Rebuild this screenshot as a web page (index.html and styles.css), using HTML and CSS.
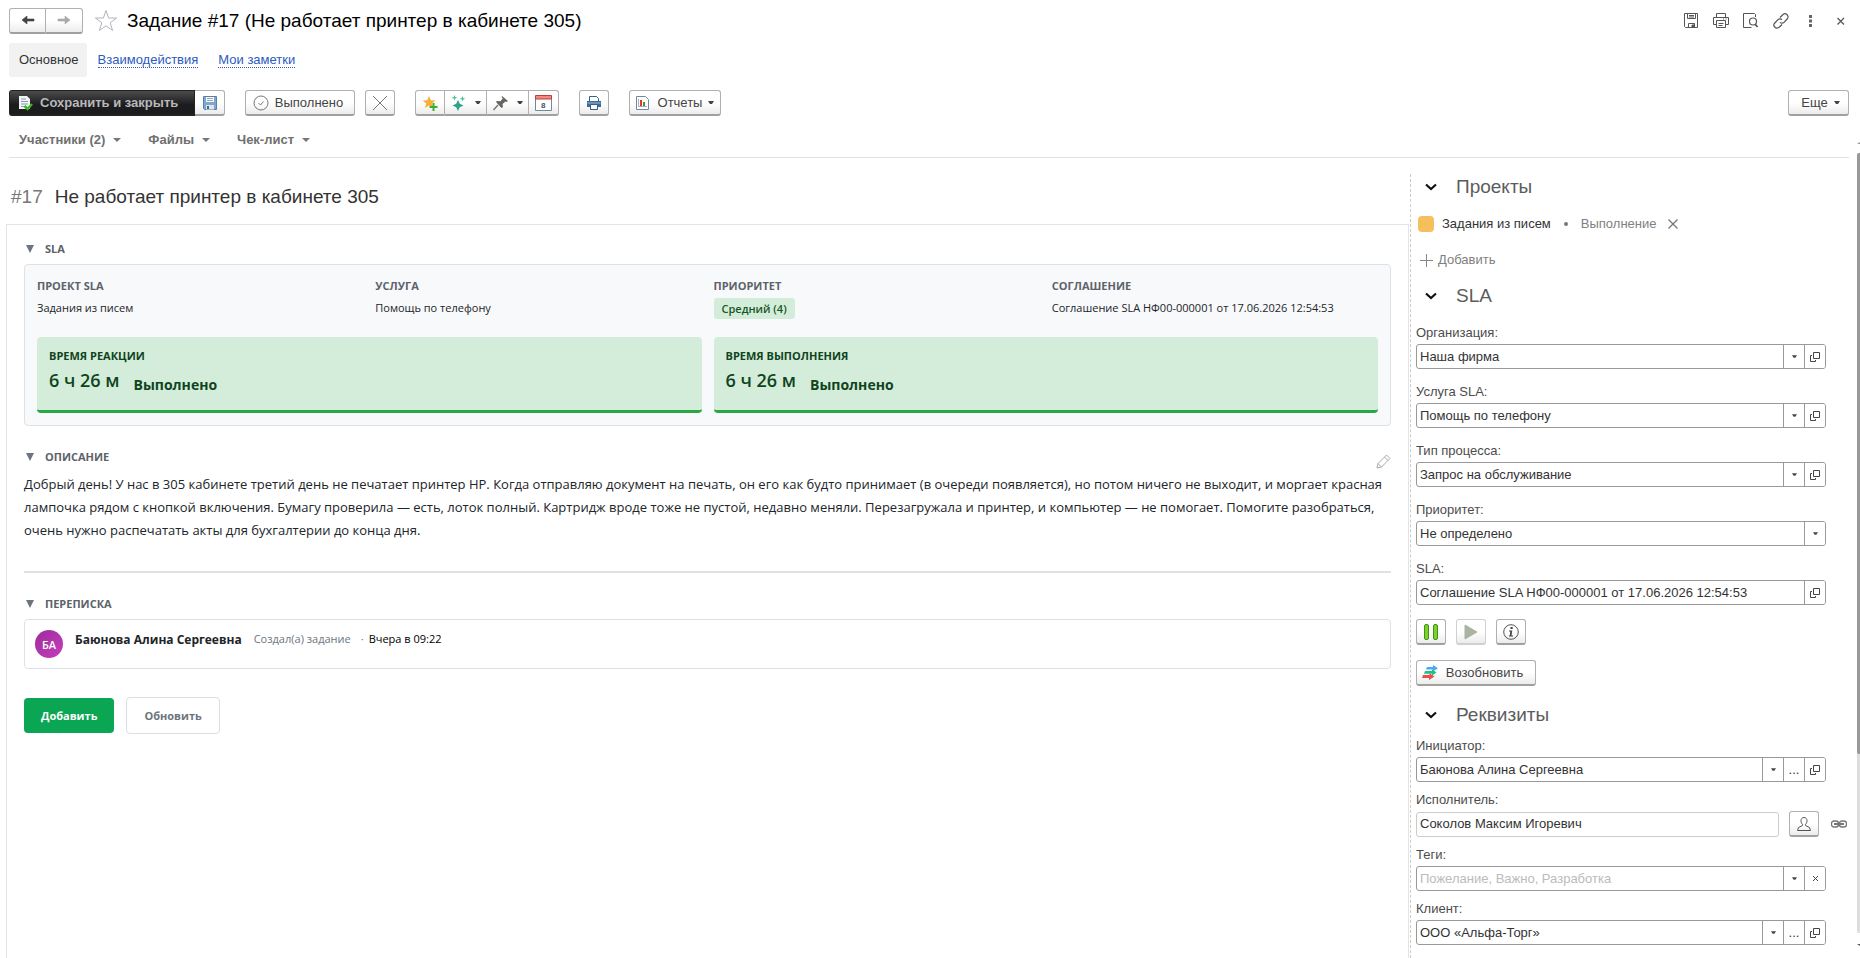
FILE: index.html
```html
<!DOCTYPE html>
<html lang="ru">
<head>
<meta charset="utf-8">
<title>Задание #17 (Не работает принтер в кабинете 305)</title>
<link rel="stylesheet" href="styles.css">
</head>
<body>
<svg class="sprite" aria-hidden="true">
  <symbol id="caret" viewBox="0 0 6 4"><path d="M0 0h6L4 3H2z" fill="#444"/></symbol>
  <symbol id="open" viewBox="0 0 10 10"><path d="M3.5.5h6v6h-6zM2 3.500H.5v6h5V8" fill="none" stroke="#444"/></symbol>
  <symbol id="chev" viewBox="0 0 12 8"><path d="M1 1.500l5 4.500 5-4.500" fill="none" stroke="#111" stroke-width="2.200"/></symbol>
  <symbol id="tri" viewBox="0 0 8 8"><path d="M0 0h8L4 8z" fill="#6c757d"/></symbol>
</svg>
<div class="page">
  <header class="titlebar">
    <div class="group">
      <button class="btn nav" aria-label="Назад"><svg width="14" height="10" viewBox="0 0 14 10"><path d="M1 5l5-4v3h7v2H6v3z" fill="#444" stroke="#444" stroke-width=".6"/></svg></button>
      <button class="btn nav" aria-label="Вперед"><svg width="14" height="10" viewBox="0 0 14 10"><path d="M13 5L8 1v3H1v2h7v3z" fill="#aaa" stroke="#aaa" stroke-width=".6"/></svg></button>
    </div>
    <button class="plain star" aria-label="Избранное"><svg width="24" height="23" viewBox="0 0 24 23"><path d="M12 1.500l2.600 7.500h8l-6.400 4.800 2.400 7.700-6.600-4.700-6.600 4.700 2.400-7.700L1.400 9h8z" fill="#fff" stroke="#b0b4b8"/></svg></button>
    <h1 class="title">Задание #17 (Не работает принтер в кабинете 305)</h1>
    <div class="tools">
      <button class="plain" aria-label="Сохранить"><svg width="16" height="16" viewBox="0 0 16 16" fill="none" stroke="#555"><path d="M1.500.5h13v14h-12l-1-1z"/><path d="M4.500.5v5h8v-5M6 2.500h5M6 4h5M5.500 14.500v-4h6v4"/><path d="M9 12h2v2H9z" fill="#555"/></svg></button>
      <button class="plain" aria-label="Печать"><svg width="16" height="16" viewBox="0 0 16 16" fill="none" stroke="#555"><path d="M3.500 4V.5h9V4M3.500 11.500h-3v-7h15v7h-3"/><path d="M3.500 7.500h9v7h-9zM5.500 10.500h5M5.500 12.500h4M10 6h1M12.500 6h1"/></svg></button>
      <button class="plain" aria-label="Просмотр"><svg width="16" height="16" viewBox="0 0 16 16" fill="none" stroke="#555"><path d="M12.500 4V1.500l-1-1H.5v14h8"/><circle cx="10" cy="8.500" r="3.500" stroke-width="1.200"/><path d="M12 11l2.500 3" stroke-width="1.800"/></svg></button>
      <button class="plain" aria-label="Ссылка"><svg width="16" height="16" viewBox="0 0 16 16" fill="none" stroke="#555" stroke-width="1.200"><path d="M7 4.500L9.800 1.800a2.800 2.800 0 0 1 4.400 4.200L11 9.300a2.800 2.800 0 0 1-4 0"/><path d="M9 11.500l-2.800 2.700A2.800 2.800 0 0 1 1.800 10L5 6.700a2.800 2.800 0 0 1 4 0"/></svg></button>
      <button class="plain" aria-label="Меню"><svg width="16" height="16" viewBox="0 0 16 16"><path d="M6 2h3v3H6zM6 6.500h3v3H6zM6 11h3v3H6z" fill="#666"/></svg></button>
      <button class="plain" aria-label="Закрыть"><svg width="16" height="16" viewBox="0 0 16 16"><path d="M4.500 5l6.500 6.500M11 5L4.500 11.500" stroke="#555" stroke-width="1.200"/></svg></button>
    </div>
  </header>

  <nav class="tabs">
    <span class="tab">Основное</span>
    <a class="link" href="#">Взаимодействия</a>
    <a class="link" href="#">Мои заметки</a>
  </nav>

  <div class="toolbar">
    <div class="group">
      <button class="btn primary"><svg width="16" height="16" viewBox="0 0 16 16"><path d="M1 1h8l3 3v10H1z" fill="#f2f5f8"/><path d="M3 4h5M3 6.500h7M3 9h7M3 11.500h4" stroke="#8a9aaa"/><path d="M6.500 11l3 3 4.500-5" fill="none" stroke="#3fb51f" stroke-width="2.500"/></svg>Сохранить и закрыть</button>
      <button class="btn icon" aria-label="Записать"><svg width="16" height="16" viewBox="0 0 16 16"><path d="M1.500 1.500h13v13h-12l-1-1z" fill="#7fa6cf" stroke="#5a80a6"/><path d="M4 2h8v5H4z" fill="#fff"/><path d="M5 3.500h6M5 5.500h6" stroke="#8fa3b5"/><path d="M4 10h8v4.500H4z" fill="#dfe7ee"/><path d="M5 11h2v3H5z" fill="#41698f"/></svg></button>
    </div>
    <button class="btn done"><svg width="16" height="16" viewBox="0 0 16 16" fill="none" stroke="#777"><circle cx="8" cy="8" r="7"/><path d="M5.500 8l2 2L10.500 6.500"/></svg>Выполнено</button>
    <button class="btn icon" aria-label="Отменить"><svg width="16" height="16" viewBox="0 0 16 16"><path d="M1 1l14 14M15 1L1 15" stroke="#777"/></svg></button>
    <div class="group favs">
      <button class="btn icon" aria-label="В избранное"><svg width="16" height="16" viewBox="0 0 16 16"><path d="M7 1l1.800 4.200 4.700.4-3.600 3 1.200 4.400L7 10.500 3 13l1.200-4.400L.6 5.600l4.600-.4z" fill="#f9ae3c"/><path d="M11.500 8v8M7.500 12h8" stroke="#3fae29" stroke-width="2"/></svg></button>
      <button class="btn drop" aria-label="Создать"><svg width="16" height="16" viewBox="0 0 16 16" fill="#2aa58c"><path d="M7 5l1.800 3.700L12.500 10.500l-3.700 1.800L7 16l-1.800-3.700L1.500 10.500l3.700-1.800z"/><path d="M3.500 0l.8 2 2 .8-2 .8-.8 2-.8-2-2-.8 2-.8zM11.500 1l.8 2 2 .8-2 .8-.8 2-.8-2-2-.8 2-.8z" fill="#4cc49a"/></svg><svg class="car" width="6" height="4"><use href="#caret"/></svg></button>
      <button class="btn drop" aria-label="Закрепить"><svg width="16" height="16" viewBox="0 0 16 16"><path d="M9 1l6 5-1.500 1-1-.5L9.500 9l.5 3-1.500 1L2.800 6.800 4.500 6l3 .3 2.300-3L8.500 2z" fill="#66665f"/><path d="M5 10l-4.500 5" stroke="#777" stroke-width="1.500"/></svg><svg class="car" width="6" height="4"><use href="#caret"/></svg></button>
      <button class="btn icon" aria-label="Календарь"><svg width="17" height="16" viewBox="0 0 17 16"><path d="M.5 3.500h16v12H.5z" fill="#fff" stroke="#74889b"/><path d="M.5.5h16v3.500H.5z" fill="#f08a80" stroke="#c9393a"/><text x="6" y="13" class="cal">8</text></svg></button>
    </div>
    <button class="btn icon" aria-label="Печать"><svg width="16" height="16" viewBox="0 0 16 16"><path d="M3.500 6V1.500h7l2 2V6" fill="#fff" stroke="#345f88"/><path d="M1 6h14v6H1z" fill="#3f6b98"/><path d="M1.500 8h13" stroke="#9fbdd8"/><path d="M4.500 9.500h7v5h-7z" fill="#fff" stroke="#345f88"/></svg></button>
    <button class="btn reports"><svg width="13" height="14" viewBox="0 0 13 14"><path d="M.5.5h9l3 3v10H.5z" fill="#fff" stroke="#74889b"/><path d="M2.500 3v7.500H11" fill="none" stroke="#aab"/><path d="M4 4h2v6H4z" fill="#e5342b"/><path d="M7 6h2v4H7z" fill="#3b9b2e"/></svg>Отчеты<svg class="car" width="6" height="4"><use href="#caret"/></svg></button>
    <button class="btn more">Еще<svg class="car" width="6" height="4"><use href="#caret"/></svg></button>
  </div>

  <div class="submenu">
    <button class="plain">Участники (2)<svg width="8" height="4" viewBox="0 0 8 4"><path d="M0 0h8L4 4z" fill="#777"/></svg></button>
    <button class="plain">Файлы<svg width="8" height="4" viewBox="0 0 8 4"><path d="M0 0h8L4 4z" fill="#777"/></svg></button>
    <button class="plain">Чек-лист<svg width="8" height="4" viewBox="0 0 8 4"><path d="M0 0h8L4 4z" fill="#777"/></svg></button>
  </div>

  <div class="body">
    <main class="main">
      <h2 class="subject"><span class="num">#17</span>Не работает принтер в кабинете 305</h2>
      <div class="panel">
        <h3 class="sect"><svg width="8" height="8"><use href="#tri"/></svg>SLA</h3>
        <section class="sla">
          <div class="facts">
            <div class="fact"><div class="cap">ПРОЕКТ SLA</div><div class="val">Задания из писем</div></div>
            <div class="fact"><div class="cap">УСЛУГА</div><div class="val">Помощь по телефону</div></div>
            <div class="fact"><div class="cap">ПРИОРИТЕТ</div><div class="badge">Средний (4)</div></div>
            <div class="fact"><div class="cap">СОГЛАШЕНИЕ</div><div class="val">Соглашение SLA НФ00-000001 от 17.06.2026 12:54:53</div></div>
          </div>
          <div class="meters">
            <div class="meter"><div class="mcap">ВРЕМЯ РЕАКЦИИ</div><div class="mrow"><span class="time">6 ч 26 м</span><span class="state">Выполнено</span></div></div>
            <div class="meter"><div class="mcap">ВРЕМЯ ВЫПОЛНЕНИЯ</div><div class="mrow"><span class="time">6 ч 26 м</span><span class="state">Выполнено</span></div></div>
          </div>
        </section>
        <div class="secthead">
          <h3 class="sect"><svg width="8" height="8"><use href="#tri"/></svg>ОПИСАНИЕ</h3>
          <button class="plain" aria-label="Изменить"><svg width="15" height="15" viewBox="0 0 15 15" fill="none" stroke="#aaa"><path d="M1 14l1-4.500L10.500 1l3.500 3.500L5.500 13zM8.500 3l3.500 3.500M2 9.500L5.500 13"/></svg></button>
        </div>
        <p class="desc">Добрый день! У нас в 305 кабинете третий день не печатает принтер HP. Когда отправляю документ на печать, он его как будто принимает (в очереди появляется), но потом ничего не выходит, и моргает красная лампочка рядом с кнопкой включения. Бумагу проверила — есть, лоток полный. Картридж вроде тоже не пустой, недавно меняли. Перезагружала и принтер, и компьютер — не помогает. Помогите разобраться, очень нужно распечатать акты для бухгалтерии до конца дня.</p>
        <hr class="rule">
        <h3 class="sect"><svg width="8" height="8"><use href="#tri"/></svg>ПЕРЕПИСКА</h3>
        <article class="msg">
          <div class="avatar">БА</div>
          <span class="name">Баюнова Алина Сергеевна</span>
          <span class="act">Создал(а) задание</span>
          <span class="sep">·</span>
          <span class="when">Вчера в 09:22</span>
        </article>
        <div class="actions">
          <button class="add">Добавить</button>
          <button class="refresh">Обновить</button>
        </div>
      </div>
    </main>

    <aside class="side">
      <h2 class="head"><svg width="12" height="8"><use href="#chev"/></svg>Проекты</h2>
      <div class="proj">
        <span class="swatch"></span><span>Задания из писем</span><span class="dot"></span><span class="stage">Выполнение</span>
        <button class="plain" aria-label="Убрать"><svg width="10" height="10" viewBox="0 0 10 10"><path d="M.5.5l9 9M9.500.5l-9 9" stroke="#777" stroke-width="1.300"/></svg></button>
      </div>
      <button class="plain addproj"><svg width="13" height="13" viewBox="0 0 13 13"><path d="M6.500 0v13M0 6.500h13" stroke="#888"/></svg>Добавить</button>
      <h2 class="head second"><svg width="12" height="8"><use href="#chev"/></svg>SLA</h2>
      <div class="fields">
        <div class="item"><label for="org">Организация:</label><div class="field"><input id="org" value="Наша фирма"><button aria-label="Выбрать"><svg width="5" height="4"><use href="#caret"/></svg></button><button aria-label="Открыть"><svg width="10" height="10"><use href="#open"/></svg></button></div></div>
        <div class="item"><label for="srv">Услуга SLA:</label><div class="field"><input id="srv" value="Помощь по телефону"><button aria-label="Выбрать"><svg width="5" height="4"><use href="#caret"/></svg></button><button aria-label="Открыть"><svg width="10" height="10"><use href="#open"/></svg></button></div></div>
        <div class="item"><label for="prc">Тип процесса:</label><div class="field"><input id="prc" value="Запрос на обслуживание"><button aria-label="Выбрать"><svg width="5" height="4"><use href="#caret"/></svg></button><button aria-label="Открыть"><svg width="10" height="10"><use href="#open"/></svg></button></div></div>
        <div class="item"><label for="pri">Приоритет:</label><div class="field"><select id="pri"><option>Не определено</option></select><span class="arrow"><svg width="5" height="4"><use href="#caret"/></svg></span></div></div>
        <div class="item"><label for="agr">SLA:</label><div class="field"><input id="agr" value="Соглашение SLA НФ00-000001 от 17.06.2026 12:54:53"><button aria-label="Открыть"><svg width="10" height="10"><use href="#open"/></svg></button></div></div>
      </div>
      <div class="control">
        <button class="btn icon" aria-label="Пауза"><svg width="14" height="16" viewBox="0 0 14 16"><rect x=".5" y=".5" width="4" height="15" rx="1.500" fill="#7ed321" stroke="#3a9420"/><rect x="9.500" y=".5" width="4" height="15" rx="1.500" fill="#7ed321" stroke="#3a9420"/></svg></button>
        <button class="btn icon" aria-label="Запустить" disabled><svg width="14" height="16" viewBox="0 0 14 16"><path d="M1 1l12 7-12 7z" fill="#a9b5a2" stroke="#a9b5a2" stroke-linejoin="round"/></svg></button>
        <button class="btn icon" aria-label="Сведения"><svg width="16" height="16" viewBox="0 0 16 16"><circle cx="8" cy="8" r="7.300" fill="none" stroke="#555"/><path d="M7.500 3h2.200v2H7.500zM6 6.500h3.300L8.500 11.500H10V12.500H6V11.500h.8l.5-4H6z" fill="#444"/></svg></button>
      </div>
      <button class="btn resume"><svg width="16" height="15" viewBox="0 0 16 15"><path d="M5 2h6V0l5 3.200-5 3V4.500H4z" fill="#4aa8ec"/><path d="M3 6h7V4.200L14.500 7.400 10 10.500V8.800H2z" fill="#1fbf8a"/><path d="M1 10h6.500V8.200l5 3.300L7 15v-2H0z" fill="#e8504a"/></svg>Возобновить</button>
      <h2 class="head third"><svg width="12" height="8"><use href="#chev"/></svg>Реквизиты</h2>
      <div class="fields tight">
        <div class="item"><label for="ini">Инициатор:</label><div class="field"><input id="ini" value="Баюнова Алина Сергеевна"><button aria-label="Выбрать"><svg width="5" height="4"><use href="#caret"/></svg></button><button aria-label="Показать все">...</button><button aria-label="Открыть"><svg width="10" height="10"><use href="#open"/></svg></button></div></div>
        <div class="item"><label for="exe">Исполнитель:</label><div class="exec"><div class="field pale"><input id="exe" value="Соколов Максим Игоревич" readonly></div><button class="btn icon" aria-label="Назначить"><svg width="14" height="14" viewBox="0 0 14 14"><path d="M7 .5C5 .5 4 2 4 3.800c0 1.500.6 2.700 1.500 3.500v1.200L1.500 10.500l-1 3h13l-1-3-4-2V7.300C9.400 6.500 10 5.300 10 3.800 10 2 9 .5 7 .5z" fill="none" stroke="#555"/></svg></button><svg width="16" height="8" viewBox="0 0 16 8" fill="none" stroke="#777"><rect x=".5" y="1" width="7" height="6" rx="2.500" stroke-width="1.400"/><rect x="8.500" y="1" width="7" height="6" rx="2.500" stroke-width="1.400"/><path d="M3 4h10" stroke-width="2"/></svg></div></div>
        <div class="item"><label for="tag">Теги:</label><div class="field"><input id="tag" placeholder="Пожелание, Важно, Разработка"><button aria-label="Выбрать"><svg width="5" height="4"><use href="#caret"/></svg></button><button aria-label="Очистить"><svg width="5" height="5" viewBox="0 0 5 5"><path d="M0 0l5 5M5 0L0 5" stroke="#444"/></svg></button></div></div>
        <div class="item"><label for="cli">Клиент:</label><div class="field"><input id="cli" value="ООО «Альфа-Торг»"><button aria-label="Выбрать"><svg width="5" height="4"><use href="#caret"/></svg></button><button aria-label="Показать все">...</button><button aria-label="Открыть"><svg width="10" height="10"><use href="#open"/></svg></button></div></div>
      </div>
    </aside>
  </div>
  <div class="scroll"><div class="thumb"></div></div>
</div>
</body>
</html>
```
FILE: styles.css
```css
* { box-sizing: border-box; }
body { margin: 0; background: #fff; color: #333; font: 13px/16px "Liberation Sans", Arial, sans-serif; }
button, input, select { font: inherit; color: inherit; margin: 0; }
h1, h2, h3, p { margin: 0; font-weight: normal; }
svg { display: block; flex: none; }
.sprite { position: absolute; width: 0; height: 0; }
.page { position: relative; display: flex; flex-direction: column; min-height: 100vh; padding-top: 8px; }
.plain { border: 0; padding: 0; background: none; display: flex; align-items: center; }
.group { display: flex; }

.btn { display: flex; align-items: center; justify-content: center; height: 26px; padding: 0; color: #444; background: linear-gradient(#fff 50%, #ececec); border: 1px solid #b0b0b0; border-bottom: 2px solid #a0a0a0; border-radius: 3px; white-space: nowrap; }
.btn:disabled { border-color: #d0d0d0; }
.btn.icon { width: 30px; }
.group .btn + .btn { border-left: 0; border-radius: 0; }
.group .btn:first-child { border-radius: 3px 0 0 3px; }
.group .btn:last-child { border-radius: 0 3px 3px 0; }

.titlebar { display: flex; align-items: center; height: 25px; padding: 0 11px 0 9px; }
.nav { width: 37px; }
.star { margin: 0 9px 0 11px; }
.title { font-size: 19px; line-height: 24px; color: #000; }
.tools { display: flex; gap: 14px; margin-left: auto; }

.tabs { display: flex; align-items: center; gap: 20px; margin: 10px 9px 0; }
.tab { padding: 9px 8px 9px 10px; background: #f2f2f2; border-radius: 3px; margin-right: -9px; }
.link { color: #2a5bc0; text-decoration: none; border-bottom: 1px dotted #2a5bc0; line-height: 15px; }

.toolbar { display: flex; margin: 13px 11px 0 9px; }
.btn.primary { width: 186px; justify-content: flex-start; gap: 6px; padding-left: 8px; color: #b8b8b8; font-weight: bold; background: linear-gradient(#4c4c4e, #1c1c1e 60%); border-color: #222; }
.done { width: 110px; gap: 6px; margin: 0 10px 0 20px; padding-right: 4px; }
.favs { margin: 0 20px; }
.drop { width: 42px; gap: 8px; }
.reports { width: 92px; gap: 9px; margin-left: 20px; }
.reports .car, .more .car { margin-left: -3px; }
.more { width: 61px; gap: 9px; padding-left: 4px; margin-left: auto; }
.cal { font: bold 8px "Liberation Sans", sans-serif; fill: #456; }

.submenu { display: flex; align-items: center; gap: 27px; height: 42px; padding: 6px 10px 0; margin: 0 11px 0 9px; border-bottom: 1px solid #e2e2e2; }
.submenu .plain { gap: 8px; color: #707070; font-weight: bold; }

.body { flex: 1; display: flex; padding-left: 6px; }
.main { flex: 1; min-width: 0; display: flex; flex-direction: column; }
.subject { display: flex; gap: 12px; padding: 27px 5px 15px; font-size: 19px; line-height: 24px; color: #333; }
.num { color: #777; }
.panel { flex: 1; border: 1px solid #e4e4e4; border-bottom: 0; padding: 16px 17px 0; font-family: "Open Sans", "Noto Sans", sans-serif; color: #212529; }
.sect { display: flex; align-items: center; gap: 11px; padding-left: 2px; font-size: 11px; line-height: 16px; font-weight: 700; color: #5c636a; }
.sla { margin-top: 7px; padding: 12px; background: #f8f9fb; border: 1px solid #dee2e6; border-radius: 4px; }
.facts { display: grid; grid-template-columns: repeat(4, 1fr); gap: 12px; }
.fact { height: 48px; }
.cap { font-size: 11px; line-height: 18px; font-weight: 700; color: #5c636a; }
.val { font-size: 11px; line-height: 26px; }
.badge { display: inline-block; margin-top: 3px; padding: 0 8px; font-size: 11px; line-height: 21px; font-weight: 600; color: #155724; background: #d4edda; border-radius: 3px; }
.meters { display: grid; grid-template-columns: 1fr 1fr; gap: 12px; margin-top: 12px; }
.meter { height: 76px; padding: 10px 12px; color: #0f4420; background: #d4edda; border-bottom: 3px solid #28a745; border-radius: 4px; }
.mcap { font-size: 11px; line-height: 18px; font-weight: 700; }
.mrow { display: flex; gap: 14px; }
.time { font-size: 18px; line-height: 30px; font-weight: 600; }
.state { font-size: 14px; line-height: 40px; font-weight: 700; }
.secthead { display: flex; justify-content: space-between; align-items: flex-start; margin-top: 23px; }
.secthead .plain { padding-top: 5px; }
.desc { margin-top: 4px; font-size: 13px; line-height: 23px; }
.rule { margin: 29px 0 23px; border: 0; height: 2px; background: #dee2e6; }
.msg { display: flex; align-items: flex-start; margin-top: 7px; height: 50px; padding: 10px; border: 1px solid #dee2e6; border-radius: 4px; }
.avatar { width: 28px; height: 28px; border-radius: 50%; background: linear-gradient(135deg, #9b2d9b, #c83cbc); color: #fff; font-size: 11px; line-height: 30px; font-weight: 600; text-align: center; }
.name { margin: 0 12px; font-size: 12px; line-height: 20px; font-weight: 700; }
.act { font-size: 11px; line-height: 18px; color: #6c757d; }
.sep { margin: 0 5px 0 10px; font-size: 11px; line-height: 18px; color: #6c757d; }
.when { font-size: 11px; line-height: 18px; color: #000; }
.actions { display: flex; align-items: center; gap: 12px; margin-top: 28px; }
.add, .refresh { padding: 9px 17px; font-size: 11px; line-height: 17px; font-weight: 700; border-radius: 4px; }
.add { border: 0; background: #0ba654; color: #fff; }
.refresh { border: 1px solid #dcdfe2; background: #fff; color: #6c757d; }

.side { width: 442px; margin: 16px 8px 0 1px; padding: 1px 0 0 5px; border-left: 1px dashed #ccc; }
.head { display: flex; align-items: center; gap: 19px; padding-left: 9px; font-size: 19px; line-height: 24px; color: #5c5c5c; }
.second { margin-top: 16px; }
.third { margin-top: 17px; }
.proj { display: flex; align-items: center; margin-top: 17px; padding-left: 2px; height: 16px; }
.swatch { width: 16px; height: 16px; margin-right: 8px; border-radius: 4px; background: #f5c05c; }
.dot { width: 4px; height: 4px; margin: 0 13px; border-radius: 50%; background: #777; }
.stage, .addproj { color: #808080; }
.proj .plain { margin-left: 12px; }
.addproj { gap: 5px; margin: 20px 0 0 4px; }
.fields { display: flex; flex-direction: column; gap: 15px; width: 410px; margin-top: 17px; }
.tight { width: 100%; gap: 10px; margin-top: 11px; }
.item label { display: block; color: #4c4c4c; line-height: 16px; margin-bottom: 3px; }
.field { position: relative; display: flex; width: 410px; height: 25px; border: 1px solid #999; border-radius: 3px; overflow: hidden; }
.field input, .field select { flex: 1; min-width: 0; padding: 0 3px; border: 0; outline: 0; background: none; appearance: none; }
.field input::placeholder { color: #bbb; }
.field button, .arrow { display: flex; align-items: center; justify-content: center; width: 21px; padding: 0; border: 0; border-left: 1px solid #999; background: #fff; }
.exec { display: flex; align-items: center; height: 26px; }
.pale { width: 363px; border-color: #ccc; }
.exec .btn { margin: 0 12px 0 10px; }
.control { display: flex; gap: 10px; margin: 14px 0 15px; }
.resume { width: 120px; gap: 8px; padding-right: 7px; }

.scroll { position: absolute; right: 0; top: 153px; bottom: 25px; width: 3px; background: #ddd; border-radius: 2px 0 0 2px; }
.scroll::before, .scroll::after { content: ""; position: absolute; right: 0; border-left: 3px solid transparent; }
.scroll::before { top: -11px; border-bottom: 2px solid #999; }
.scroll::after { bottom: -13px; border-top: 2px solid #555; }
.thumb { height: 77%; background: #999; border-radius: 2px 0 0 2px; }
```
